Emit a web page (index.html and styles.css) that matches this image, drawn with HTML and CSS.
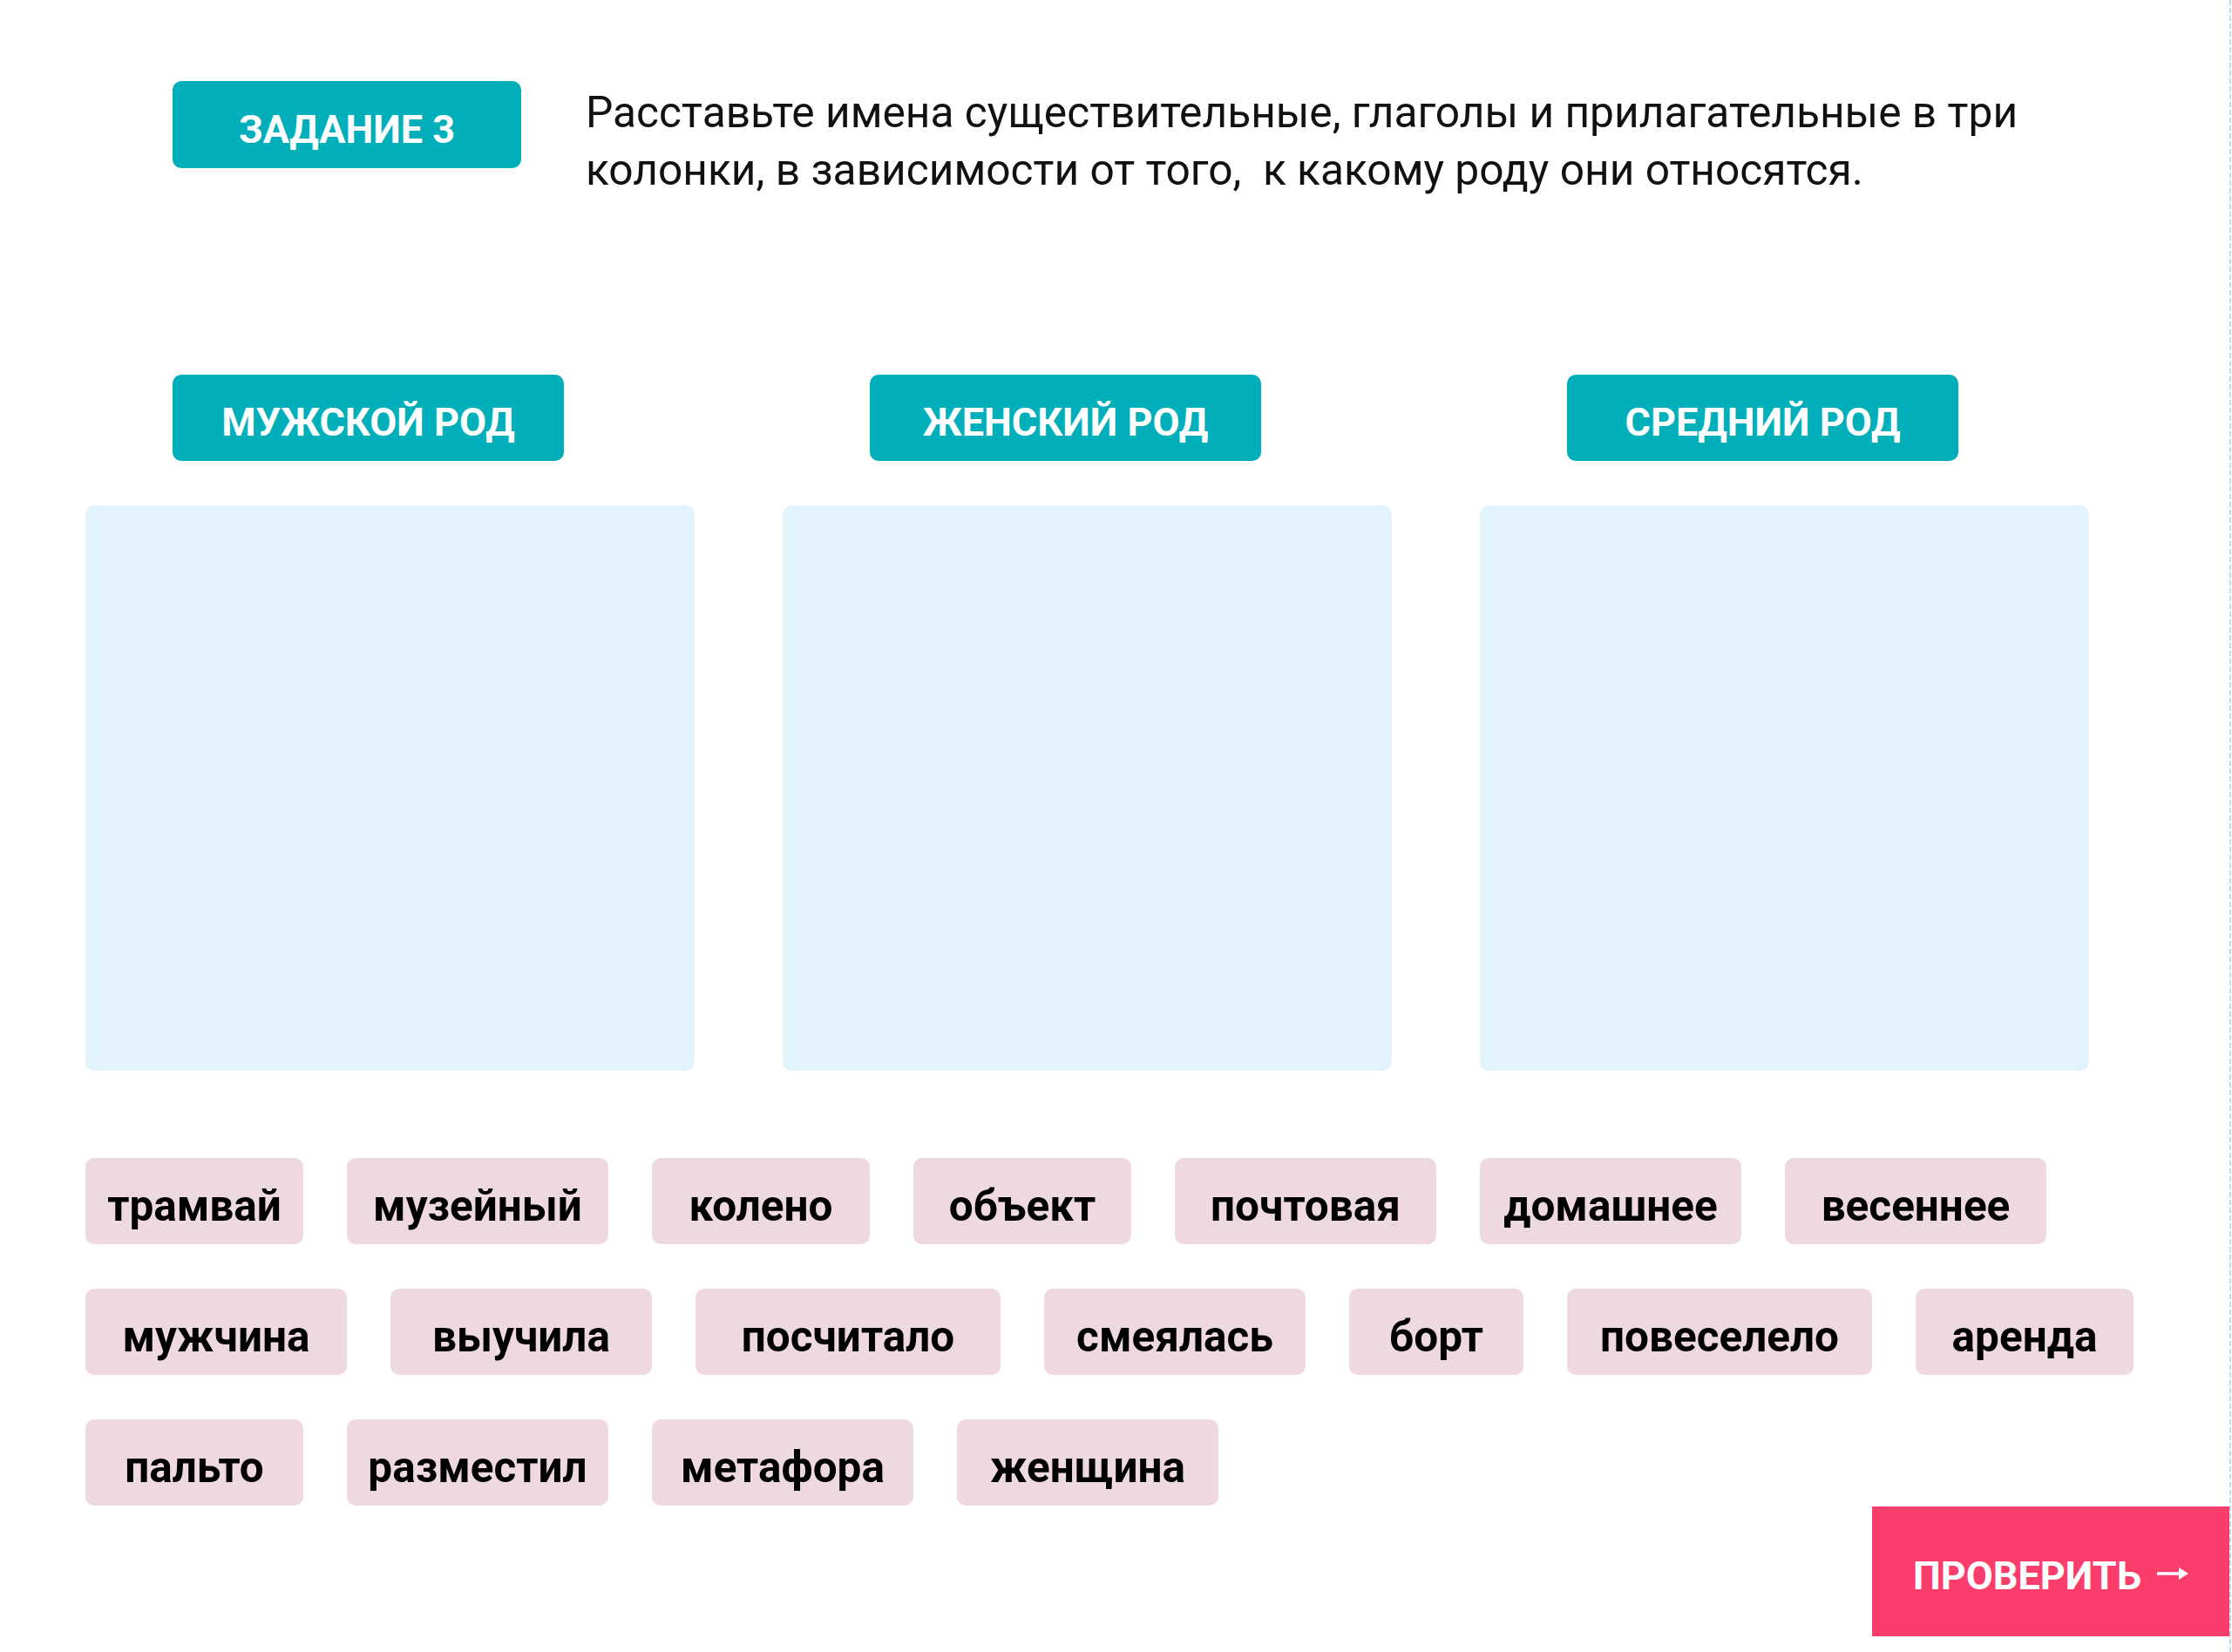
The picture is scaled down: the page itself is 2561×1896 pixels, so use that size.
FILE: index.html
```html
<!DOCTYPE html>
<html lang="ru">
<head>
<meta charset="utf-8">
<title>Задание 3</title>
<link rel="stylesheet" href="styles.css">
</head>
<body>
<div class="page">
  <main class="main">
    <section class="task">
      <div class="badge">ЗАДАНИЕ 3</div>
      <p class="instr">Расставьте имена существительные, глаголы и прилагательные в три колонки, в зависимости от того,&nbsp; к какому роду они относятся.</p>
    </section>

    <section class="columns">
      <div class="col">
        <div class="col-title">МУЖСКОЙ РОД</div>
        <div class="drop"></div>
      </div>
      <div class="col">
        <div class="col-title">ЖЕНСКИЙ РОД</div>
        <div class="drop"></div>
      </div>
      <div class="col">
        <div class="col-title">СРЕДНИЙ РОД</div>
        <div class="drop"></div>
      </div>
    </section>

    <section class="words">
      <div class="chip w250">трамвай</div>
      <div class="chip w300">музейный</div>
      <div class="chip w250">колено</div>
      <div class="chip w250">объект</div>
      <div class="chip w300">почтовая</div>
      <div class="chip w300">домашнее</div>
      <div class="chip w300">весеннее</div>
      <div class="chip w300">мужчина</div>
      <div class="chip w300">выучила</div>
      <div class="chip w350">посчитало</div>
      <div class="chip w300">смеялась</div>
      <div class="chip w200">борт</div>
      <div class="chip w350">повеселело</div>
      <div class="chip w250">аренда</div>
      <div class="chip w250">пальто</div>
      <div class="chip w300">разместил</div>
      <div class="chip w300">метафора</div>
      <div class="chip w300">женщина</div>
    </section>

    <div class="actions">
      <button class="check" type="button"><span class="check-label">ПРОВЕРИТЬ</span><svg class="check-arrow" viewBox="0 0 36 20" width="36" height="20" aria-hidden="true"><path d="M0 10 H26" stroke="#ffffff" stroke-width="3.5" fill="none"/><path d="M25 3 L36 10 L25 17 Z" fill="#ffffff"/></svg></button>
    </div>
  </main>
  <div class="divider"></div>
</div>
</body>
</html>
```

FILE: styles.css
```css
* {
  box-sizing: border-box;
}

html, body {
  margin: 0;
  padding: 0;
  background: #ffffff;
}

body {
  font-family: Roboto, "Noto Sans", "Liberation Sans", sans-serif;
  color: #000000;
}

.page {
  display: flex;
  min-height: 1896px;
  width: 2561px;
}

.main {
  width: 2558px;
  padding-left: 98px;
  display: flex;
  flex-direction: column;
}

.divider {
  width: 2px;
  align-self: stretch;
  background: repeating-linear-gradient(to bottom, #bcdbe6 0, #bcdbe6 6px, transparent 6px, transparent 9px);
}

/* task header */
.task {
  display: flex;
  align-items: flex-start;
  padding-top: 93px;
  margin-left: 100px;
}

.badge {
  width: 400px;
  height: 100px;
  flex: none;
  padding-top: 10px;
  background: #01afba;
  border-radius: 10px;
  color: #ffffff;
  font-weight: 700;
  font-size: 45px;
  display: flex;
  align-items: center;
  justify-content: center;
}

.instr {
  margin: 0 0 0 74px;
  padding-top: 3px;
  width: 1780px;
  font-size: 49.7px;
  line-height: 66px;
  color: #111111;
}

/* columns */
.columns {
  margin-top: 202px;
  display: grid;
  grid-template-columns: 699px 699px 699px;
  column-gap: 101px;
}

.col {
  display: flex;
  flex-direction: column;
}

.col-title {
  margin-left: 100px;
  width: 449px;
  height: 99px;
  padding-top: 10px;
  background: #01afba;
  border-radius: 10px;
  color: #ffffff;
  font-weight: 700;
  font-size: 45px;
  display: flex;
  align-items: center;
  justify-content: center;
}

.drop {
  margin-top: 51px;
  height: 649px;
  background: #e2f3fd;
  border-radius: 10px;
}

/* words */
.words {
  margin-top: 100px;
  width: 2400px;
  display: flex;
  flex-wrap: wrap;
  gap: 51px 50px;
}

.chip {
  height: 99px;
  padding-top: 10px;
  background: #efd9e1;
  border-radius: 10px;
  font-weight: 700;
  font-size: 49.5px;
  display: flex;
  align-items: center;
  justify-content: center;
}

.w200 { width: 200px; }
.w250 { width: 250px; }
.w300 { width: 300px; }
.w350 { width: 350px; }

/* action */
.actions {
  margin-top: 1px;
  display: flex;
  justify-content: flex-end;
}

.check {
  width: 410px;
  height: 149px;
  border: 0;
  border-radius: 0;
  background: #fb3d6b;
  color: #ffffff;
  font-family: Roboto, "Noto Sans", "Liberation Sans", sans-serif;
  font-weight: 700;
  font-size: 45px;
  padding: 0;
  display: flex;
  align-items: center;
  justify-content: center;
  gap: 18px;
}

.check-label {
  padding-top: 10px;
}

.check-arrow {
  display: block;
  margin-top: 4px;
  flex: none;
}
```
